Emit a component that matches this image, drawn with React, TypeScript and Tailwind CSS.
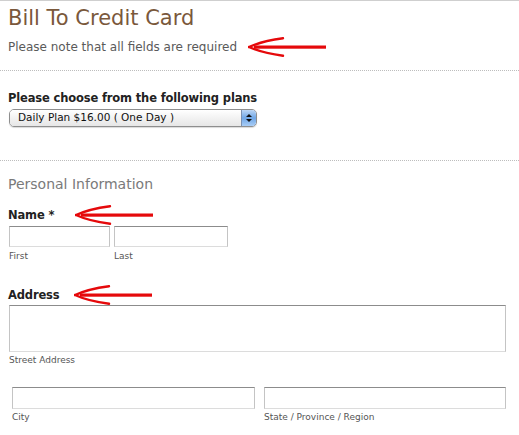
import React from 'react';

function RedArrow() {
    return (
        <svg width="78" height="20" viewBox="0 0 78 20" className="shrink-0">
            <rect x="6" y="8.5" width="72" height="3.2" fill="#e5090b" />
            <path d="M1 10 Q14 4 35 1.2" stroke="#e5090b" strokeWidth="2.4" fill="none" strokeLinecap="round" />
            <path d="M1 10 Q14 16 35 18.8" stroke="#e5090b" strokeWidth="2.4" fill="none" strokeLinecap="round" />
        </svg>
    );
}

function Field({ className = '', h = 'h-[21px]' }: { className?: string; h?: string }) {
    return (
        <div
            className={`${h} ${className} bg-white border border-[#c4c4c4] border-t-[#8c8c8c] border-b-[#dcdcdc]`}
        />
    );
}

export default function App() {
    return (
        <div className="w-[519px] h-[435px] overflow-hidden bg-white border-t border-[#cfcfcf] font-['DejaVu_Sans',sans-serif]">
            {/* header */}
            <div className="px-2 pt-[3px] h-[70px] border-b border-dotted border-[#bdbdbd]">
                <h1 className="text-[21px] leading-[28px] text-[#7a583b]">Bill To Credit Card</h1>
                <div className="flex items-center mt-[5px]">
                    <p className="text-[12px] leading-[16px] text-[#5a5a5a]">Please note that all fields are required</p>
                    <div className="ml-[11px]">
                        <RedArrow />
                    </div>
                </div>
            </div>

            {/* plans */}
            <div className="px-2 pt-[19px] h-[90px] border-b border-dotted border-[#bdbdbd]">
                <p className="text-[11.5px] leading-[16px] font-bold text-[#222] tracking-[-0.15px]">Please choose from the following plans</p>
                <div className="mt-[3px] ml-px w-[248px] h-[18px] flex rounded-[5px] border border-[#8e8e8e] overflow-hidden shadow-[0_1px_1px_rgba(0,0,0,0.15)]">
                    <div className="flex-1 flex items-center pl-[8px] bg-gradient-to-b from-white to-[#e6e6e6] text-[10.5px] text-[#111]">
                        Daily Plan $16.00 ( One Day )
                    </div>
                    <div className="w-[15px] flex flex-col items-center justify-center gap-[2px] bg-gradient-to-b from-[#bcd6f4] via-[#6fa6e6] to-[#a9cdf5] border-l border-[#7a90b0]">
                        <span className="w-0 h-0 border-x-[3px] border-x-transparent border-b-[3px] border-b-[#111]" />
                        <span className="w-0 h-0 border-x-[3px] border-x-transparent border-t-[3px] border-t-[#111]" />
                    </div>
                </div>
            </div>

            {/* personal info */}
            <div className="px-2 pt-[13px]">
                <h2 className="text-[14px] leading-[20px] text-[#7a7a7a]">Personal Information</h2>

                <div className="flex items-center mt-[11px]">
                    <p className="text-[11.5px] leading-[16px] font-bold text-[#222] tracking-[-0.15px]">Name *</p>
                    <div className="ml-[21px]">
                        <RedArrow />
                    </div>
                </div>
                <div className="flex gap-[4px] ml-px mt-[1px]">
                    <div className="w-[101px]">
                        <Field />
                        <p className="text-[9px] leading-[14px] text-[#555] mt-[2px]">First</p>
                    </div>
                    <div className="w-[114px]">
                        <Field />
                        <p className="text-[9px] leading-[14px] text-[#555] mt-[2px]">Last</p>
                    </div>
                </div>

                <div className="flex items-center mt-[22px]">
                    <p className="text-[11.5px] leading-[16px] font-bold text-[#222] tracking-[-0.15px]">Address</p>
                    <div className="ml-[15px]">
                        <RedArrow />
                    </div>
                </div>
                <div className="ml-px w-[497px]">
                    <Field h="h-[47px]" />
                    <p className="text-[9px] leading-[14px] text-[#555] mt-[1px]">Street Address</p>
                </div>

                <div className="flex gap-[9px] ml-[4px] mt-[20px]">
                    <div className="w-[243px]">
                        <Field h="h-[22px]" />
                        <p className="text-[9px] leading-[14px] text-[#555] mt-[1px]">City</p>
                    </div>
                    <div className="w-[242px]">
                        <Field h="h-[22px]" />
                        <p className="text-[9px] leading-[14px] text-[#555] mt-[1px]">State / Province / Region</p>
                    </div>
                </div>
            </div>
        </div>
    );
}
